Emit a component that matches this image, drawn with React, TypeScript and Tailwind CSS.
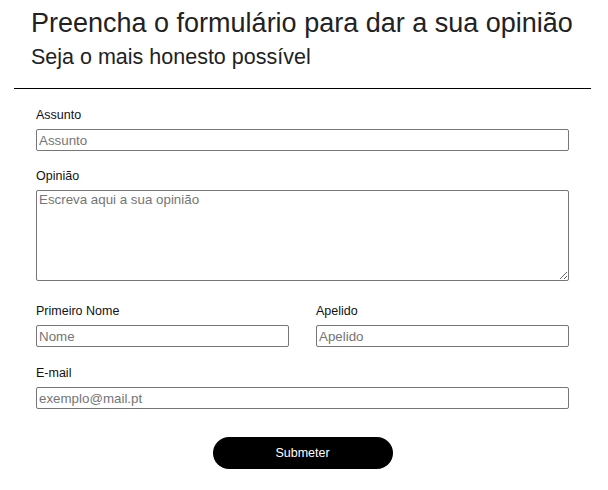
import React from "react";

const inputCls =
  "block w-full h-[22px] border border-[#767676] rounded-[2px] px-[2px] text-[13.33px] leading-[16px] text-[#111] placeholder:text-[#757575] bg-white outline-none";

function Label({ children }: { children: React.ReactNode }) {
  return <label className="block text-[12.5px] leading-[16px] text-[#111] mb-[6px]">{children}</label>;
}

export default function App() {
  return (
    <div className="w-[608px] h-[490px] bg-white overflow-hidden" style={{ fontFamily: '"Liberation Sans", Arial, sans-serif' }}>
      <div className="pl-[31px] pt-[8px]">
        <h1 className="text-[27px] leading-[31px] text-[#222] font-normal">Preencha o formulário para dar a sua opinião</h1>
        <h2 className="text-[21.5px] leading-[25px] text-[#222] font-normal mt-[6px]">Seja o mais honesto possível</h2>
      </div>
      <div className="ml-[14px] w-[577px] h-px bg-black mt-[18px]" />
      <form className="ml-[36px] w-[533px] mt-[18px] flex flex-col" onSubmit={(e) => e.preventDefault()}>
        <div>
          <Label>Assunto</Label>
          <input className={inputCls} placeholder="Assunto" />
        </div>
        <div className="mt-[17px]">
          <Label>Opinião</Label>
          <textarea
            className="block w-full h-[91px] border border-[#767676] rounded-[2px] px-[2px] py-[1px] text-[13.33px] leading-[16px] text-[#111] placeholder:text-[#757575] bg-white outline-none"
            placeholder="Escreva aqui a sua opinião"
          />
        </div>
        <div className="mt-[22px] grid grid-cols-2 gap-[27px]">
          <div>
            <Label>Primeiro Nome</Label>
            <input className={inputCls} placeholder="Nome" />
          </div>
          <div>
            <Label>Apelido</Label>
            <input className={inputCls} placeholder="Apelido" />
          </div>
        </div>
        <div className="mt-[18px]">
          <Label>E-mail</Label>
          <input className={inputCls} placeholder="exemplo@mail.pt" />
        </div>
        <div className="mt-[28px] flex justify-center">
          <button type="submit" className="w-[180px] h-[32px] rounded-full bg-black text-white text-[12.5px]">
            Submeter
          </button>
        </div>
      </form>
    </div>
  );
}
